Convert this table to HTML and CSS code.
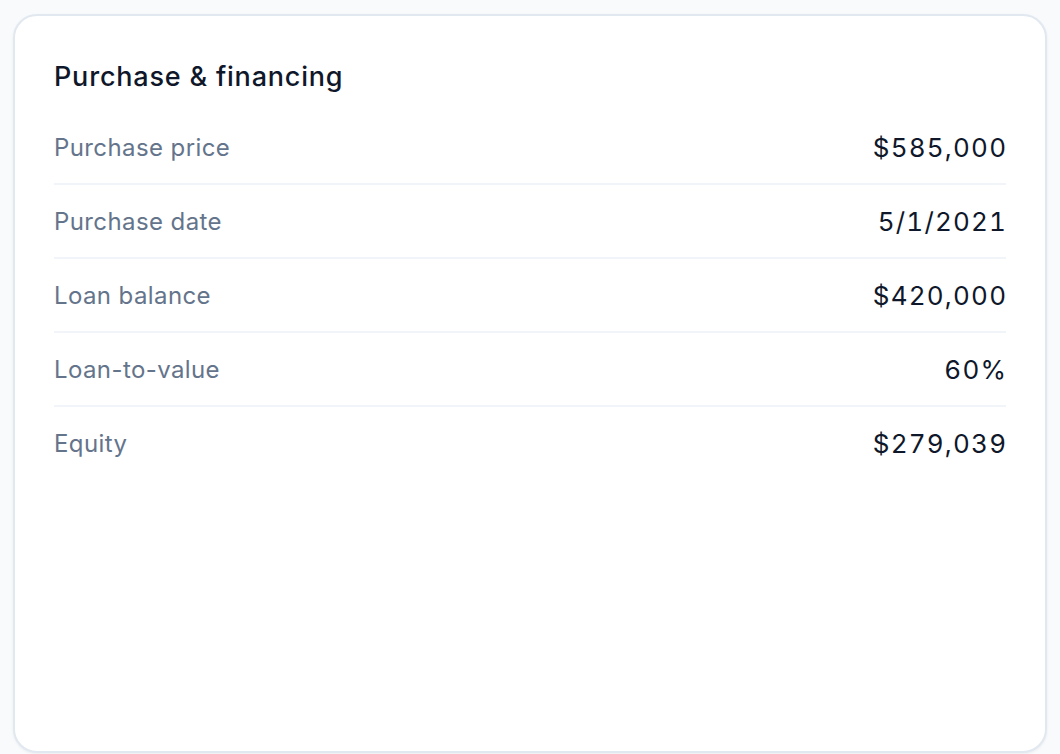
FILE: index.html
```html
<!DOCTYPE html>
<html lang="en">
	<head>
		<meta charset="utf-8">
		<title>Purchase &amp; financing</title>
		<link rel="stylesheet" href="styles.css">
	</head>
	<body>
		<div class="card">
			<h2 class="card-title">Purchase &amp; financing</h2>
			<div class="rows">
				<div class="row">
					<span class="label">Purchase price</span>
					<span class="value">$585,000</span>
				</div>
				<div class="row">
					<span class="label">Purchase date</span>
					<span class="value">5/1/2021</span>
				</div>
				<div class="row">
					<span class="label">Loan balance</span>
					<span class="value">$420,000</span>
				</div>
				<div class="row">
					<span class="label">Loan-to-value</span>
					<span class="value">60%</span>
				</div>
				<div class="row">
					<span class="label">Equity</span>
					<span class="value">$279,039</span>
				</div>
			</div>
		</div>
	</body>
</html>
```

FILE: styles.css
```css
html, body {
	height: 100%;
}
body {
	margin: 0;
	padding: 14px 13px 0 13px;
	box-sizing: border-box;
	background-color: #f8fafc;
	font-family: Inter, "Noto Sans", sans-serif;
	overflow: hidden;
}
.card {
	height: 739px;
	box-sizing: border-box;
	background-color: #fff;
	border: 2px solid #e2e8f0;
	border-radius: 24px;
	box-shadow: 0 1px 3px rgba(15, 23, 42, 0.06);
	padding: 44px 39px 0 39px;
}
.card-title {
	margin: 0 0 17px 0;
	font-size: 27px;
	line-height: 34px;
	font-weight: 500;
	letter-spacing: 0.8px;
	color: #0f172a;
}
.row {
	display: flex;
	justify-content: space-between;
	align-items: center;
	height: 72px;
	border-bottom: 2px solid #f1f5f9;
}
.row:last-child {
	border-bottom: none;
}
.label {
	font-size: 24px;
	letter-spacing: 0.4px;
	color: #64748b;
}
.value {
	font-size: 26px;
	letter-spacing: 1.2px;
	margin-right: -1.2px;
	font-variant-numeric: tabular-nums;
	color: #0f172a;
}
```
